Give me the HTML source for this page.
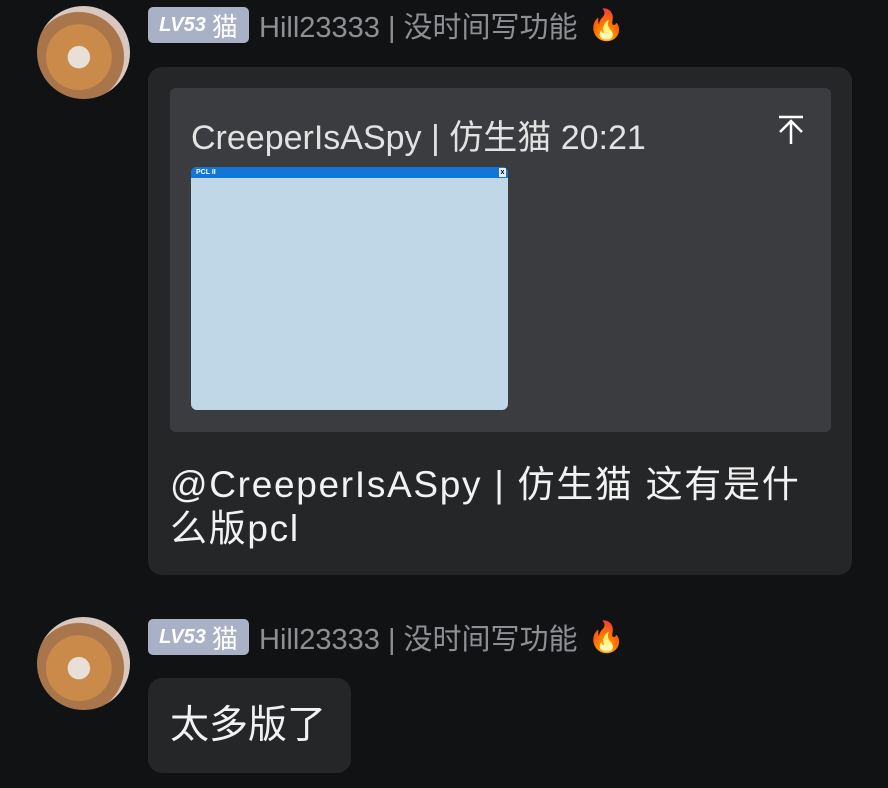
<!DOCTYPE html>
<html><head><meta charset="utf-8"><style>
body{margin:0;width:888px;height:788px;background:#111214;font-family:"Liberation Sans","Noto Sans CJK SC",sans-serif;overflow:hidden;position:relative}
.av{position:absolute;left:37px;width:93px;height:93px;border-radius:50%;background:radial-gradient(circle at 45% 55%,#e8e0d8 0 15%,#c98a4a 16% 45%,#a8764a 46% 62%,#d8c8c0 63%);}
.hd{position:absolute;left:148px;height:36px;display:flex;align-items:center;font-size:29px;color:#8e8f93}
.lv{background:#a8b1c6;color:#fff;border-radius:5px;height:36px;width:101px;display:flex;align-items:center;justify-content:center;font-size:26px;margin-right:10px}
.lv i{font-size:20px;font-weight:bold;margin-right:6px}
.fire{margin-left:10px;font-size:30px}
.bub{position:absolute;left:148px;background:#252628;border-radius:14px;color:#f2f2f2}
</style></head><body>
<div class="av" style="top:6px"></div>
<div class="hd" style="top:7px"><div class="lv"><i>LV53</i>猫</div>Hill23333 | 没时间写功能<span class="fire">🔥</span></div>
<div class="bub" style="top:67px;width:704px;height:508px">
  <div style="position:absolute;left:22px;top:21px;width:661px;height:344px;background:#3b3c3f;border-radius:6px">
    <div style="position:absolute;left:21px;top:22px;font-size:34px;color:#e2e2e2">CreeperIsASpy | 仿生猫 20:21</div>
    <svg style="position:absolute;left:608px;top:27px" width="26" height="30" viewBox="0 0 26 30"><path d="M1 2H25M13 29V6M2 17L13 6L24 17" stroke="#fff" stroke-width="2.5" fill="none"/></svg>
    <div style="position:absolute;left:21px;top:79px;width:317px;height:243px;background:#bfd7e6;border-radius:6px;overflow:hidden">
      <div style="height:11px;background:#1275d8;color:#fff;font-size:7px;font-weight:bold;padding-left:5px;line-height:11px">PCL II<span style="position:absolute;right:2px;top:1px;width:7px;height:9px;background:#eee;color:#000;font-size:7px;line-height:9px;text-align:center">x</span></div>
    </div>
  </div>
  <div style="position:absolute;left:22px;top:396px;width:640px;font-size:37px;line-height:44px;letter-spacing:1.7px">@CreeperIsASpy | 仿生猫 这有是什么版pcl</div>
</div>
<div class="av" style="top:617px"></div>
<div class="hd" style="top:619px"><div class="lv"><i>LV53</i>猫</div>Hill23333 | 没时间写功能<span class="fire">🔥</span></div>
<div class="bub" style="top:678px;width:203px;height:95px"><div style="position:absolute;left:22px;top:26px;font-size:39px;line-height:44px">太多版了</div></div>
</body></html>
